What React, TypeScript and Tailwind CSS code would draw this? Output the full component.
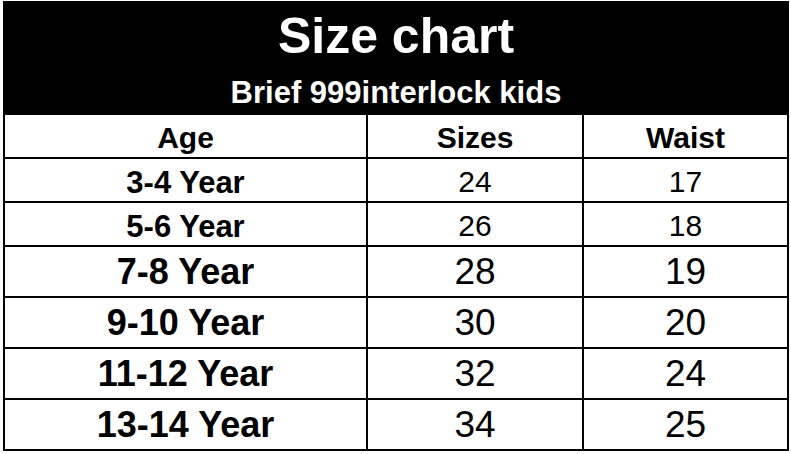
const rows = [
  { age: '3-4 Year', size: '24', waist: '17', big: false },
  { age: '5-6 Year', size: '26', waist: '18', big: false },
  { age: '7-8 Year', size: '28', waist: '19', big: true },
  { age: '9-10 Year', size: '30', waist: '20', big: true },
  { age: '11-12 Year', size: '32', waist: '24', big: true },
  { age: '13-14 Year', size: '34', waist: '25', big: true },
];

const App = () => {
  return (
    <div className="min-h-screen bg-white pt-[1px] pl-[3px] font-['Liberation_Sans',Arial,sans-serif] text-black">
      <div className="w-[786px] border-2 border-black">
        {/* Title band */}
        <div className="flex flex-col bg-black text-white font-bold">
          <div className="flex h-[59px] items-center justify-center pt-[6px]">
            <span className="text-[50px] leading-none">Size chart</span>
          </div>
          <div className="flex h-[53px] items-center justify-center pt-[8px]">
            <span className="text-[31px] leading-none">Brief 999interlock kids</span>
          </div>
        </div>

        {/* Column headings */}
        <div className="flex h-[44px] border-b-2 border-black text-[30px] font-bold">
          <div className="flex w-[363px] items-center justify-center border-r-2 border-black pt-[3px]">
            <span className="leading-none">Age</span>
          </div>
          <div className="flex w-[216px] items-center justify-center border-r-2 border-black pt-[3px]">
            <span className="leading-none">Sizes</span>
          </div>
          <div className="flex flex-1 items-center justify-center pt-[3px]">
            <span className="leading-none">Waist</span>
          </div>
        </div>

        {/* Data rows */}
        {rows.map((r, i) => (
          <div
            key={r.age}
            className={`flex border-black ${i < rows.length - 1 ? 'border-b-2' : ''} ${
              r.big ? (i === rows.length - 1 ? 'h-[49px]' : 'h-[51px]') : 'h-[44px]'
            }`}
          >
            <div className={`flex w-[363px] items-center justify-center border-r-2 border-black font-bold ${r.big ? 'text-[36px]' : 'pt-[5px] text-[31px]'}`}>
              <span className="leading-none">{r.age}</span>
            </div>
            <div className={`flex w-[216px] items-center justify-center border-r-2 border-black ${r.big ? 'text-[37px]' : 'pt-[4px] text-[30px]'}`}>
              <span className="leading-none">{r.size}</span>
            </div>
            <div className={`flex flex-1 items-center justify-center ${r.big ? 'text-[37px]' : 'pt-[4px] text-[30px]'}`}>
              <span className="leading-none">{r.waist}</span>
            </div>
          </div>
        ))}
      </div>
    </div>
  );
};

export default App;
